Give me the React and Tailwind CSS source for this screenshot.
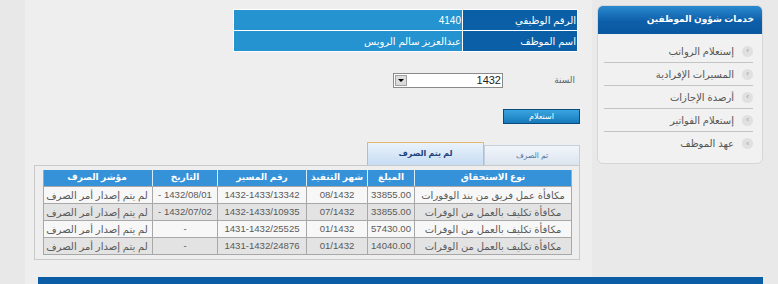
export default function App() {
  const rows = [
    ["مكافأة عمل فريق من بند الوفورات", "33855.00", "08/1432", "1432-1433/13342", "1432/08/01 -", "لم يتم إصدار أمر الصرف"],
    ["مكافأة تكليف بالعمل من الوفرات", "33855.00", "07/1432", "1432-1433/10935", "1432/07/02 -", "لم يتم إصدار أمر الصرف"],
    ["مكافأة تكليف بالعمل من الوفرات", "57430.00", "01/1432", "1431-1432/25525", "-", "لم يتم إصدار أمر الصرف"],
    ["مكافأة تكليف بالعمل من الوفرات", "14040.00", "01/1432", "1431-1432/24876", "-", "لم يتم إصدار أمر الصرف"],
  ];
  const heads = ["نوع الاستحقاق", "المبلغ", "شهر التنفيذ", "رقم المسير", "التاريخ", "مؤشر الصرف"];
  const widths = ["w-[157px]", "w-[47px]", "w-[61px]", "w-[89px]", "w-[65px]", "w-[110px]"];
  const menu = ["إستعلام الرواتب", "المسيرات الإفرادية", "أرصدة الإجازات", "إستعلام الفواتير", "عهد الموظف"];

  return (
    <div
      dir="rtl"
      className="w-[778px] h-[284px] overflow-hidden flex flex-col font-['Liberation_Sans','DejaVu_Sans',sans-serif] text-[10px] bg-[linear-gradient(to_right,#e8e8e8_25px,#eeeeee_25px,#eeeeee_592px,#e9e9e9_592px)]"
    >
      <div className="h-[277px] flex">
        {/* Sidebar */}
        <aside className="w-[186px] shrink-0 pt-[5px] pr-[15px] pl-[5px]">
          <div className="rounded-[6px] border border-[#d6d6d6] bg-[#f1f1f1] overflow-hidden">
            <div className="h-[28px] flex items-center pr-[8px] text-white font-bold text-[9px] bg-[linear-gradient(to_bottom,#2a8ad0,#0d5ea9_55%,#0a57a1)]">
              خدمات شؤون الموظفين
            </div>
            <div className="pt-[6px] pb-[8px] pl-[6px] pr-[9px]">
              {menu.map((m, i) => (
                <div
                  key={i}
                  className={`h-[23px] flex items-center gap-[8px] text-[#555] text-[10px] ${i < 4 ? "border-b border-[#c4c4c4]" : ""}`}
                >
                  <span className="w-[11px] h-[11px] rounded-full bg-[#e0e0e0] flex items-center justify-center text-[8px] leading-none text-[#999]">
                    ›
                  </span>
                  <span>{m}</span>
                </div>
              ))}
            </div>
          </div>
        </aside>

        {/* Main */}
        <main className="w-[567px] shrink-0 pr-[12px] pl-[9px] flex flex-col items-start">
          <div className="mt-[9px] mr-[2px] w-[345px] bg-white p-[1px] flex flex-col gap-[1px] text-white">
            <div className="flex h-[20px] gap-[1px]">
              <div className="w-[114px] bg-[#0b5fa6] flex items-center pr-[1px]">الرقم الوظيفي</div>
              <div className="flex-1 bg-[#2493cf] flex items-center pr-[1px]">4140</div>
            </div>
            <div className="flex h-[20px] gap-[1px]">
              <div className="w-[114px] bg-[#0b5fa6] flex items-center pr-[1px]">اسم الموظف</div>
              <div className="flex-1 bg-[#2493cf] flex items-center pr-[1px]">عبدالعزيز سالم الرويس</div>
            </div>
          </div>

          <div className="mt-[21px] flex items-center h-[15px]">
            <div className="w-[77px] pr-[5px] text-[#666] text-[9px]">السنة</div>
            <div className="w-[110px] h-[15px] bg-white border border-[#8a8a8a] flex items-center">
              <span className="flex-1 text-right pr-[1px] text-[#222] text-[11px]" dir="ltr">1432</span>
              <span className="w-[12px] h-[11px] ml-[1px] bg-[#dcdcdc] border border-[#a0a0a0] flex items-center justify-center">
                <span className="w-0 h-0 border-l-[3px] border-r-[3px] border-t-[3px] border-l-transparent border-r-transparent border-t-black"></span>
              </span>
            </div>
          </div>

          <button className="mt-[21px] w-[77px] h-[15px] border border-[#0b4a7c] bg-[linear-gradient(to_bottom,#3aa5e0,#1679bb)] text-white text-[8px] leading-none flex items-center justify-center">
            استعلام
          </button>

          <div className="mt-[18px] h-[23px] w-full flex items-end">
            <div className="w-[96px] h-[20px] border border-b-0 border-[#c6d0dc] bg-[linear-gradient(to_bottom,#f1f5fa,#dbe4ef)] flex items-center justify-center text-[#4a76a8] text-[7.5px]">
              تم الصرف
            </div>
            <div className="w-[117px] h-[24px] -mb-[1px] border border-[#e2b96a] bg-[linear-gradient(to_bottom,#e9f2fc,#c8dcf3)] flex items-center justify-center font-bold text-[#1c3f7c] text-[8px]">
              لم يتم الصرف
            </div>
          </div>

          <div className="w-full h-[95px] border border-[#c9c9c9] pt-[4px] pr-[7px] pl-[8px]">
            <div className="w-[529px] border border-[#a8a8a8] border-t-0">
              <div className="flex h-[16px] bg-[#3592d9] text-white font-bold text-[9px]">
                {heads.map((h, i) => (
                  <div key={i} className={`${widths[i]} shrink-0 flex items-center justify-center ${i < 5 ? "border-l border-[#d8ecfb]" : ""}`}>
                    {h}
                  </div>
                ))}
              </div>
              {rows.map((r, ri) => (
                <div key={ri} className={`flex h-[17px] border-t border-[#a8a8a8] text-[#5a5a5a] ${ri % 2 ? "bg-[#e3e3e3]" : "bg-[#f7f7f7]"}`}>
                  {r.map((c, ci) => (
                    <div key={ci} className={`${widths[ci]} shrink-0 flex items-center justify-center whitespace-nowrap ${ci < 5 ? "border-l border-[#a8a8a8]" : ""} ${ci >= 1 && ci <= 4 ? "text-[9.6px]" : ""}`}>
                      {c}
                    </div>
                  ))}
                </div>
              ))}
            </div>
          </div>
        </main>

        <div className="w-[25px] shrink-0"></div>
      </div>
      <div className="h-[7px] ml-[38px] mr-[15px] bg-[#0b5ea6]"></div>
    </div>
  );
}
